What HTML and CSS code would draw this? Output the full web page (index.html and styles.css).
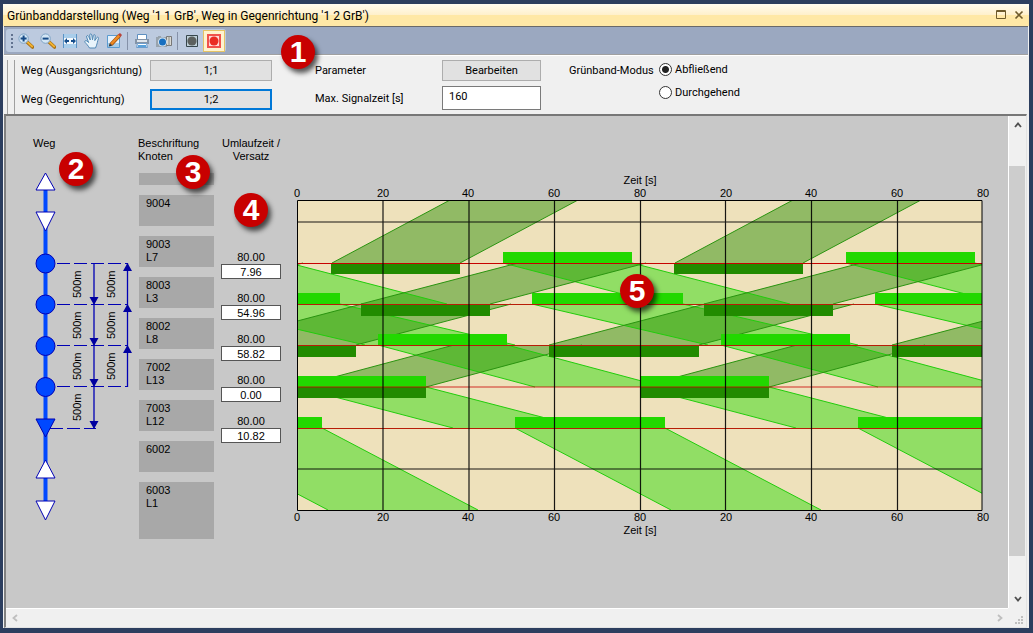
FILE: index.html
```html
<!DOCTYPE html>
<html lang="de">
<head>
<meta charset="utf-8">
<title>Grünbanddarstellung</title>
<link rel="stylesheet" href="styles.css">
</head>
<body>
<main class="window">
  <header class="titlebar">
    <h1 class="title">Grünbanddarstellung (Weg '1 1 GrB', Weg in Gegenrichtung '1 2 GrB')</h1>
    <button class="caption-btn" aria-label="Maximieren"><svg width="10" height="10"><path d="M.5 .5h9v8h-9zM0 1.500h10" stroke="#6f5b2c" fill="none"/></svg></button>
    <button class="caption-btn" aria-label="Schließen"><svg width="10" height="10"><path d="M1.500 1.500l7 7M8.500 1.500l-7 7" stroke="#6f5b2c" stroke-width="1.600"/></svg></button>
  </header>

  <div class="toolbar">
    <div class="tools" role="toolbar">
      <span class="grip"></span>
      <button class="tool" aria-label="Vergrößern"><svg width="16" height="16"><path d="M9 9l5.500 5" stroke="#a8721a" stroke-width="3.600" stroke-linecap="round"/><path d="M9.500 9.200l4.700 4.300" stroke="#f3b32f" stroke-width="1.800" stroke-linecap="round"/><circle cx="5.600" cy="5.600" r="4.700" fill="#d3e6f5" stroke="#7fa3c5"/><path d="M5.600 2.600v6M2.600 5.600h6" stroke="#164a86" stroke-width="2"/></svg></button>
      <button class="tool" aria-label="Verkleinern"><svg width="16" height="16"><path d="M9 9l5.500 5" stroke="#a8721a" stroke-width="3.600" stroke-linecap="round"/><path d="M9.500 9.200l4.700 4.300" stroke="#f3b32f" stroke-width="1.800" stroke-linecap="round"/><circle cx="5.600" cy="5.600" r="4.700" fill="#d3e6f5" stroke="#7fa3c5"/><path d="M2.600 5.600h6" stroke="#164a86" stroke-width="2"/></svg></button>
      <button class="tool" aria-label="Einpassen"><svg width="16" height="16"><path d="M1 1h14v14h-14z" fill="#f4f9fd"/><path d="M1 1h14v4h-14zM1 11h14v4h-14z" fill="#a9cdea"/><path d="M1.500 1v14M14.500 1v14" stroke="#5b93c6"/><path d="M4 8h3M9 8h3" stroke="#174e8c" stroke-width="2"/><path d="M2 8l3-3v6zM14 8l-3-3v6z" fill="#174e8c"/></svg></button>
      <button class="tool" aria-label="Verschieben"><svg width="16" height="16"><path d="M5.500 15C4 12.500 2.500 11 1 9.300 .2 8 1.700 7 3 8L4.600 9.500 2.600 4C2.200 2.400 4 2 4.600 3.400L6.300 7 5.700 2C5.700.600 7.500.600 7.800 2L8.500 6.800 9.400 2.400C9.700 1.100 11.400 1.500 11.200 2.900L10.800 7.600 12.800 4.600C13.600 3.500 15 4.400 14.400 5.700 13.500 8 13.300 11 11.500 15z" fill="#e9f4fb" stroke="#5188b5"/></svg></button>
      <button class="tool" aria-label="Bearbeiten"><svg width="16" height="16"><path d="M1.500 2.500h12v12h-12z" fill="#e6f1fa" stroke="#5b9bd0"/><path d="M2 10h11v4h-11z" fill="#a6cdea"/><path d="M5 11.500L13.500 2.500" stroke="#a45814" stroke-width="4"/><path d="M5.300 11L13.400 2.400" stroke="#ef8b24" stroke-width="2.400"/><path d="M12 1.500l2 -1.500 2 2-1.500 2z" fill="#b8433a"/><path d="M2.700 13.600l1-3.300 2.500 2.400z" fill="#333"/></svg></button>
      <span class="sep"></span>
      <button class="tool" aria-label="Drucken"><svg width="16" height="16"><path d="M3.500 1.500h9v5h-9z" fill="#fff" stroke="#5e8fc0"/><path d="M1 6h14v5h-14z" fill="#8494a8"/><path d="M3 7h10v2h-10z" fill="#dfe5ec"/><path d="M3.500 10.500h9l1 4h-11z" fill="#fff" stroke="#6d9ccb"/><path d="M4 12h8l.5 2h-9z" fill="#58a1db"/></svg></button>
      <button class="tool" aria-label="Bild speichern"><svg width="16" height="16"><path d="M0 4h2v-1h3v1h6v10h-11z" fill="#98a3ad"/><path d="M10.500 3.500h5v9h-5z" fill="#d9d9d4" stroke="#777"/><path d="M13 3v10" stroke="#8c8c85"/><circle cx="6.500" cy="9" r="4.500" fill="#d5e6f5"/><circle cx="6.500" cy="9" r="3.500" fill="#176fc0"/></svg></button>
      <span class="sep"></span>
      <button class="tool" aria-label="Knoten"><svg width="16" height="16"><path d="M2.500 2.500h11v11h-11z" fill="#bfd0d8" stroke="#37464c"/><circle cx="8" cy="8" r="4.600" fill="#5c605e"/></svg></button>
      <button class="tool active" aria-label="Aktiver Knoten"><svg width="16" height="16"><path d="M2 2h12v12h-12z" fill="#ffd9d6" stroke="#f0524c" stroke-width="2"/><circle cx="8" cy="8" r="4.500" fill="#ea2c22"/></svg></button>
    </div>
    <span class="badge badge-1">1</span>
  </div>

  <form class="params">
    <div class="fields fields-route">
      <label for="out">Weg (Ausgangsrichtung)</label>
      <button type="button" class="push" id="out">1;1</button>
      <label for="back">Weg (Gegenrichtung)</label>
      <button type="button" class="push focused" id="back">1;2</button>
    </div>
    <div class="fields fields-param">
      <label for="edit">Parameter</label>
      <button type="button" class="push" id="edit">Bearbeiten</button>
      <label for="maxsig">Max. Signalzeit [s]</label>
      <input class="textbox" id="maxsig" value="160">
    </div>
    <div class="mode" role="radiogroup" aria-labelledby="mode-label">
      <span id="mode-label" class="mode-label">Grünband-Modus</span>
      <div class="mode-options">
        <label class="option"><input type="radio" name="mode" checked>Abfließend</label>
        <label class="option"><input type="radio" name="mode">Durchgehend</label>
      </div>
    </div>
  </form>

  <section class="view">
    <div class="canvas">
      <div class="col col-route">
        <h2 class="col-head head-route">Weg</h2>
        <svg class="route" width="108" height="362" viewBox="0 0 108 362">
          <path d="M15.500 24V345" stroke="#0048ff" stroke-width="4"/>
          <g fill="#fff" stroke="#0000b4">
            <path d="M15.500 10L25 27H6zM15.500 68L6 49H25zM15.500 297L25 315H6zM15.500 357L6 338H25z"/>
          </g>
          <g fill="#0048ff" stroke="#0000b4">
            <circle cx="15.500" cy="100.500" r="9.500"/><circle cx="15.500" cy="141.500" r="9.500"/>
            <circle cx="15.500" cy="183" r="9.500"/><circle cx="15.500" cy="224" r="9.500"/>
            <path d="M15.500 274L6 256H25z"/>
          </g>
          <path d="M27 100.500H98M27 141.500H98M27 182.500H98M27 223.500H98M20 265.500H66" fill="none" stroke="#0000b4" stroke-dasharray="13 4"/>
          <path d="M64 100V265M97.500 100V224" stroke="#0000b4" stroke-width="1.300"/>
          <path d="M64 142l-4.500-8h9zM64 183l-4.500-8h9zM64 224l-4.500-8h9zM64 266l-4.500-8h9zM97.500 100l-4.500 8h9zM97.500 141l-4.500 8h9zM97.500 182l-4.500 8h9z" fill="#0000a0"/>
          <g class="svg-text">
            <text transform="translate(51 135) rotate(-90)">500m</text>
            <text transform="translate(51 176) rotate(-90)">500m</text>
            <text transform="translate(51 217) rotate(-90)">500m</text>
            <text transform="translate(51 258) rotate(-90)">500m</text>
            <text transform="translate(85 135) rotate(-90)">500m</text>
            <text transform="translate(85 176) rotate(-90)">500m</text>
            <text transform="translate(85 217) rotate(-90)">500m</text>
          </g>
        </svg>
        <span class="badge badge-2">2</span>
      </div>

      <div class="col col-nodes">
        <h2 class="col-head">Beschriftung<br>Knoten</h2>
        <ul class="nodes">
          <li class="node node-first"></li>
          <li class="node">9004</li>
          <li class="node">9003<br>L7</li>
          <li class="node">8003<br>L3</li>
          <li class="node">8002<br>L8</li>
          <li class="node">7002<br>L13</li>
          <li class="node">7003<br>L12</li>
          <li class="node">6002</li>
          <li class="node node-last">6003<br>L1</li>
        </ul>
        <span class="badge badge-3">3</span>
      </div>

      <div class="col col-cycle">
        <h2 class="col-head head-center">Umlaufzeit /<br>Versatz</h2>
        <div class="cycles">
          <label class="cycle">80.00<input class="offset" value="7.96"></label>
          <label class="cycle">80.00<input class="offset" value="54.96"></label>
          <label class="cycle">80.00<input class="offset" value="58.82"></label>
          <label class="cycle">80.00<input class="offset" value="0.00"></label>
          <label class="cycle">80.00<input class="offset" value="10.82"></label>
        </div>
        <span class="badge badge-4">4</span>
      </div>

      <div class="col col-chart">
        <svg class="chart" width="702" height="366" viewBox="0 0 702 366">
          <defs>
            <clipPath id="plot"><path d="M0 0H685V310H0z"/></clipPath>
            <g id="light-bands" fill="#22db00" fill-opacity=".46">
              <path d="M206 63H335L493 104H364z"/>
              <path d="M235 104H386L561 145H411z"/>
              <path d="M81 145H210L367 187H238z"/>
              <path d="M0 187H129L287 228H156z"/>
              <path d="M218 228H368L524 310H374z"/>
            </g>
            <g id="dark-bands" fill="#228b00" fill-opacity=".46">
              <path d="M35 63H163L281 0H153z"/>
              <path d="M64 104H193L349 63H221z"/>
              <path d="M252 145H402L557 104H408z"/>
              <path d="M0 187H129L285 145H157z"/>
            </g>
            <g id="edges" fill="none">
              <path stroke="#22cc0c" d="M206 63L364 104M335 63L493 104M235 104L411 145M386 104L561 145M81 145L238 187M210 145L367 187M0 187L156 228M129 187L287 228M218 228L374 310M368 228L524 310"/>
              <path stroke="#2a9410" d="M35 63L153 0M163 63L281 0M64 104L221 63M193 104L349 63M252 145L408 104M402 145L557 104M0 187L157 145M129 187L285 145"/>
            </g>
            <g id="bars">
              <path fill="#22d800" d="M206 52h129v11h-129zM235 93h151v11h-151zM81 134h129v11h-129zM0 176h129v11h-129zM218 217h150v11h-150z"/>
              <path fill="#228b00" d="M34 63h129v11h-129zM64 105h129v11h-129zM252 146h150v11h-150zM0 187h129v11h-129z"/>
            </g>
          </defs>
          <g transform="translate(8 26)">
            <path d="M0 0H685V310H0z" fill="#eee1bb"/>
            <g clip-path="url(#plot)">
              <use href="#light-bands" x="-343"/><use href="#light-bands"/><use href="#light-bands" x="343"/>
              <use href="#dark-bands" x="-343"/><use href="#dark-bands"/><use href="#dark-bands" x="343"/>
              <use href="#edges" x="-343"/><use href="#edges"/><use href="#edges" x="343"/>
              <use href="#bars" x="-343"/><use href="#bars"/><use href="#bars" x="343"/>
            </g>
            <path d="M0 63.500H685" stroke="#c80000"/>
            <path d="M0 104.500H685M0 145.500H685M0 228.500H685" stroke="#b81c08"/>
            <path d="M0 187H685" stroke="#c80000" stroke-opacity=".8"/>
            <path d="M0 22H685M0 269H685M86 0V310M172 0V310M257.500 0V310M343.500 0V310M428.500 0V310M514.500 0V310M600.500 0V310" stroke="#000" stroke-width="1.200" stroke-opacity=".9"/>
            <path d="M.5 .5H685V310.500H.5z" fill="none" stroke="#000"/>
          </g>
          <g class="svg-text" text-anchor="middle">
            <text x="351" y="10">Zeit [s]</text>
            <text x="8" y="23">0</text><text x="94" y="23">20</text><text x="179" y="23">40</text><text x="265" y="23">60</text><text x="351" y="23">80</text><text x="437" y="23">20</text><text x="522" y="23">40</text><text x="608" y="23">60</text><text x="694" y="23">80</text>
            <text x="8" y="347">0</text><text x="94" y="347">20</text><text x="179" y="347">40</text><text x="265" y="347">60</text><text x="351" y="347">80</text><text x="437" y="347">20</text><text x="522" y="347">40</text><text x="608" y="347">60</text><text x="694" y="347">80</text>
            <text x="351" y="360">Zeit [s]</text>
          </g>
        </svg>
        <span class="badge badge-5">5</span>
      </div>
    </div>

    <div class="vscroll">
      <button class="arrow" aria-label="Nach oben"><svg width="8" height="6"><path d="M1 5l3-3.500L7 5" fill="none" stroke="#505050" stroke-width="1.800"/></svg></button>
      <div class="track"><div class="thumb"></div></div>
      <button class="arrow" aria-label="Nach unten"><svg width="8" height="6"><path d="M1 1l3 3.500L7 1" fill="none" stroke="#505050" stroke-width="1.800"/></svg></button>
    </div>
    <div class="hscroll">
      <button class="arrow" aria-label="Nach links"><svg width="6" height="8"><path d="M5 1L1.500 4 5 7" fill="none" stroke="#bfbfbf" stroke-width="1.800"/></svg></button>
      <button class="arrow" aria-label="Nach rechts"><svg width="6" height="8"><path d="M1 1l3.500 3L1 7" fill="none" stroke="#bfbfbf" stroke-width="1.800"/></svg></button>
    </div>
    <div class="corner"><svg width="9" height="9"><path d="M6 0h2v2h-2zM3 3h2v2h-2zM6 3h2v2h-2zM0 6h2v2h-2zM3 6h2v2h-2zM6 6h2v2h-2z" fill="#bfbfbf"/></svg></div>
  </section>
</main>
</body>
</html>
```
FILE: styles.css
```css
* {
  box-sizing: border-box;
}

body {
  margin: 0;
  height: 100vh;
  padding: 4px 4px 5px 3px;
  background: #2c3e5f;
  font: 11px/13px Roboto, "Open Sans", sans-serif;
  color: #000;
}

button,
input {
  font: inherit;
  color: inherit;
  margin: 0;
}

.window {
  display: flex;
  flex-direction: column;
  height: 100%;
  background: #f0f0f0;
}

.titlebar {
  display: flex;
  align-items: center;
  gap: 8px;
  flex: none;
  height: 22px;
  padding: 0 5px 0 4px;
  background: linear-gradient(#fffcf0, #fff0cb 50%, #ffe8a6 50%);
}

.title {
  flex: 1;
  margin: 0;
  padding-top: 2px;
  font: 12px/20px Roboto, "Open Sans", sans-serif;
  white-space: nowrap;
}

.caption-btn {
  display: flex;
  align-items: center;
  padding: 0;
  height: 18px;
  border: 0;
  background: none;
}

.toolbar {
  position: relative;
  display: flex;
  flex: none;
  height: 29px;
  margin: 0 1px;
  padding: 2px 2px;
  background: #9ba8c0;
  border-top: 1px solid #696969;
  border-bottom: 1px solid #a0a0a0;
}

.tools {
  display: flex;
  align-items: center;
  padding: 0 1px 0 5px;
  background: #bccadf;
  border-radius: 3px;
}

.grip {
  width: 2px;
  height: 14px;
  margin-right: 2px;
  background: repeating-linear-gradient(#61728f 0 2px, transparent 2px 4px);
}

.tool {
  display: flex;
  align-items: center;
  justify-content: center;
  width: 22px;
  height: 22px;
  padding: 0;
  border: 1px solid transparent;
  background: none;
}

.tool.active {
  border-color: #e5c365;
  background: #fff3cf;
}

.sep {
  width: 1px;
  height: 18px;
  margin: 0 3px 0 2px;
  background: #8591a8;
}

.params {
  display: flex;
  align-items: flex-start;
  flex: none;
  height: 59px;
  margin: 0 1px;
  padding: 4px 0 0 3px;
  border-top: 1px solid #fff;
}

.params::before {
  content: "";
  flex: none;
  width: 6px;
  height: 54px;
  margin-right: 6px;
  border: solid #a0a0a0;
  border-width: 0 1px;
}

.fields {
  display: grid;
  align-items: center;
}

.fields-route {
  grid-template-columns: 129px 122px;
  row-gap: 8px;
  margin-right: 43px;
}

.fields-param {
  grid-template-columns: 127px 99px;
  row-gap: 5px;
  margin-right: 28px;
}

.push {
  height: 21px;
  padding: 0;
  border: 1px solid #adadad;
  background: #e1e1e1;
}

.push.focused {
  border: 2px solid #0078d7;
}

.textbox {
  width: 100%;
  height: 24px;
  padding: 0 6px 3px;
  border: 1px solid #7a7a7a;
  background: #fff;
}

.mode {
  display: flex;
  padding-top: 3px;
}

.mode-label {
  width: 90px;
  padding-top: 1px;
  white-space: nowrap;
}

.mode-options {
  display: grid;
  gap: 10px;
}

.option {
  display: flex;
  align-items: center;
  gap: 3px;
}

.option input {
  appearance: none;
  width: 13px;
  height: 13px;
  border: 1px solid #333;
  border-radius: 50%;
  background: #fff;
}

.option input:checked {
  background: radial-gradient(circle, #222 0 3px, #fff 4px);
}

.view {
  display: grid;
  grid-template: 1fr 19px / 1fr 18px;
  flex: 1;
  min-height: 0;
  margin: 0 2px 0 1px;
  border: 1px solid #696969;
  border-width: 2px 1px 1px 2px;
  border-color: #777 #e3e3e3 #e3e3e3 #808080;
}

.canvas {
  display: flex;
  align-items: flex-start;
  overflow: hidden;
  padding: 21px 0 0 24px;
  background: #c8c8c8;
  font: 11px/13px "Liberation Sans", Arial, sans-serif;
}

.col {
  position: relative;
  flex: none;
}

.col-head {
  height: 26px;
  margin: 0;
  font: inherit;
  white-space: nowrap;
}

.head-route {
  padding-left: 3px;
}

.head-center {
  text-align: center;
}

.route,
.chart {
  display: block;
}

.svg-text {
  font: 11px "Liberation Sans", Arial, sans-serif;
}

.col-nodes {
  width: 76px;
  margin-right: 7px;
}

.nodes {
  display: grid;
  gap: 10px;
  margin: 0 0 0 1px;
  padding: 10px 0 0;
  list-style: none;
}

.node {
  height: 31px;
  padding: 2px 7px;
  background: #a8a8a8;
}

.node-first {
  height: 12px;
}

.node-last {
  height: 57px;
}

.col-cycle {
  width: 60px;
  margin-right: 8px;
}

.cycles {
  display: grid;
  gap: 13px;
  padding-top: 88px;
}

.cycle {
  display: block;
  text-align: center;
}

.offset {
  display: block;
  width: 100%;
  height: 15px;
  padding: 0;
  border: 1px solid #555;
  background: #fff;
  text-align: center;
}

.col-chart {
  padding-top: 37px;
}

.badge {
  position: absolute;
  z-index: 1;
  width: 34px;
  height: 34px;
  border-radius: 50%;
  background: #c80000;
  box-shadow: 3px 4px 5px rgba(0, 0, 0, 0.65);
  color: #fff;
  font: bold 30px/34px "Liberation Sans", Arial, sans-serif;
  text-align: center;
}

.badge-1 {
  left: 277px;
  top: 8px;
}

.badge-2 {
  left: 29px;
  top: 15px;
}

.badge-3 {
  left: 38px;
  top: 18px;
}

.badge-4 {
  left: 13px;
  top: 56px;
}

.badge-5 {
  left: 331px;
  top: 137px;
}

.vscroll,
.hscroll {
  display: flex;
  background: #f0f0f0;
}

.vscroll {
  flex-direction: column;
  border-left: 1px solid #fff;
}

.hscroll {
  justify-content: space-between;
  border-top: 1px solid #fff;
}

.arrow {
  display: flex;
  align-items: center;
  justify-content: center;
  flex: none;
  width: 17px;
  height: 18px;
  padding: 0;
  border: 0;
  background: none;
}

.track {
  display: grid;
  grid-template-rows: 32fr 391fr 34fr;
  flex: 1;
}

.thumb {
  grid-row: 2;
  margin-right: 1px;
  background: #cdcdcd;
}

.corner {
  display: flex;
  align-items: flex-end;
  justify-content: flex-end;
  padding: 2px;
}
```
